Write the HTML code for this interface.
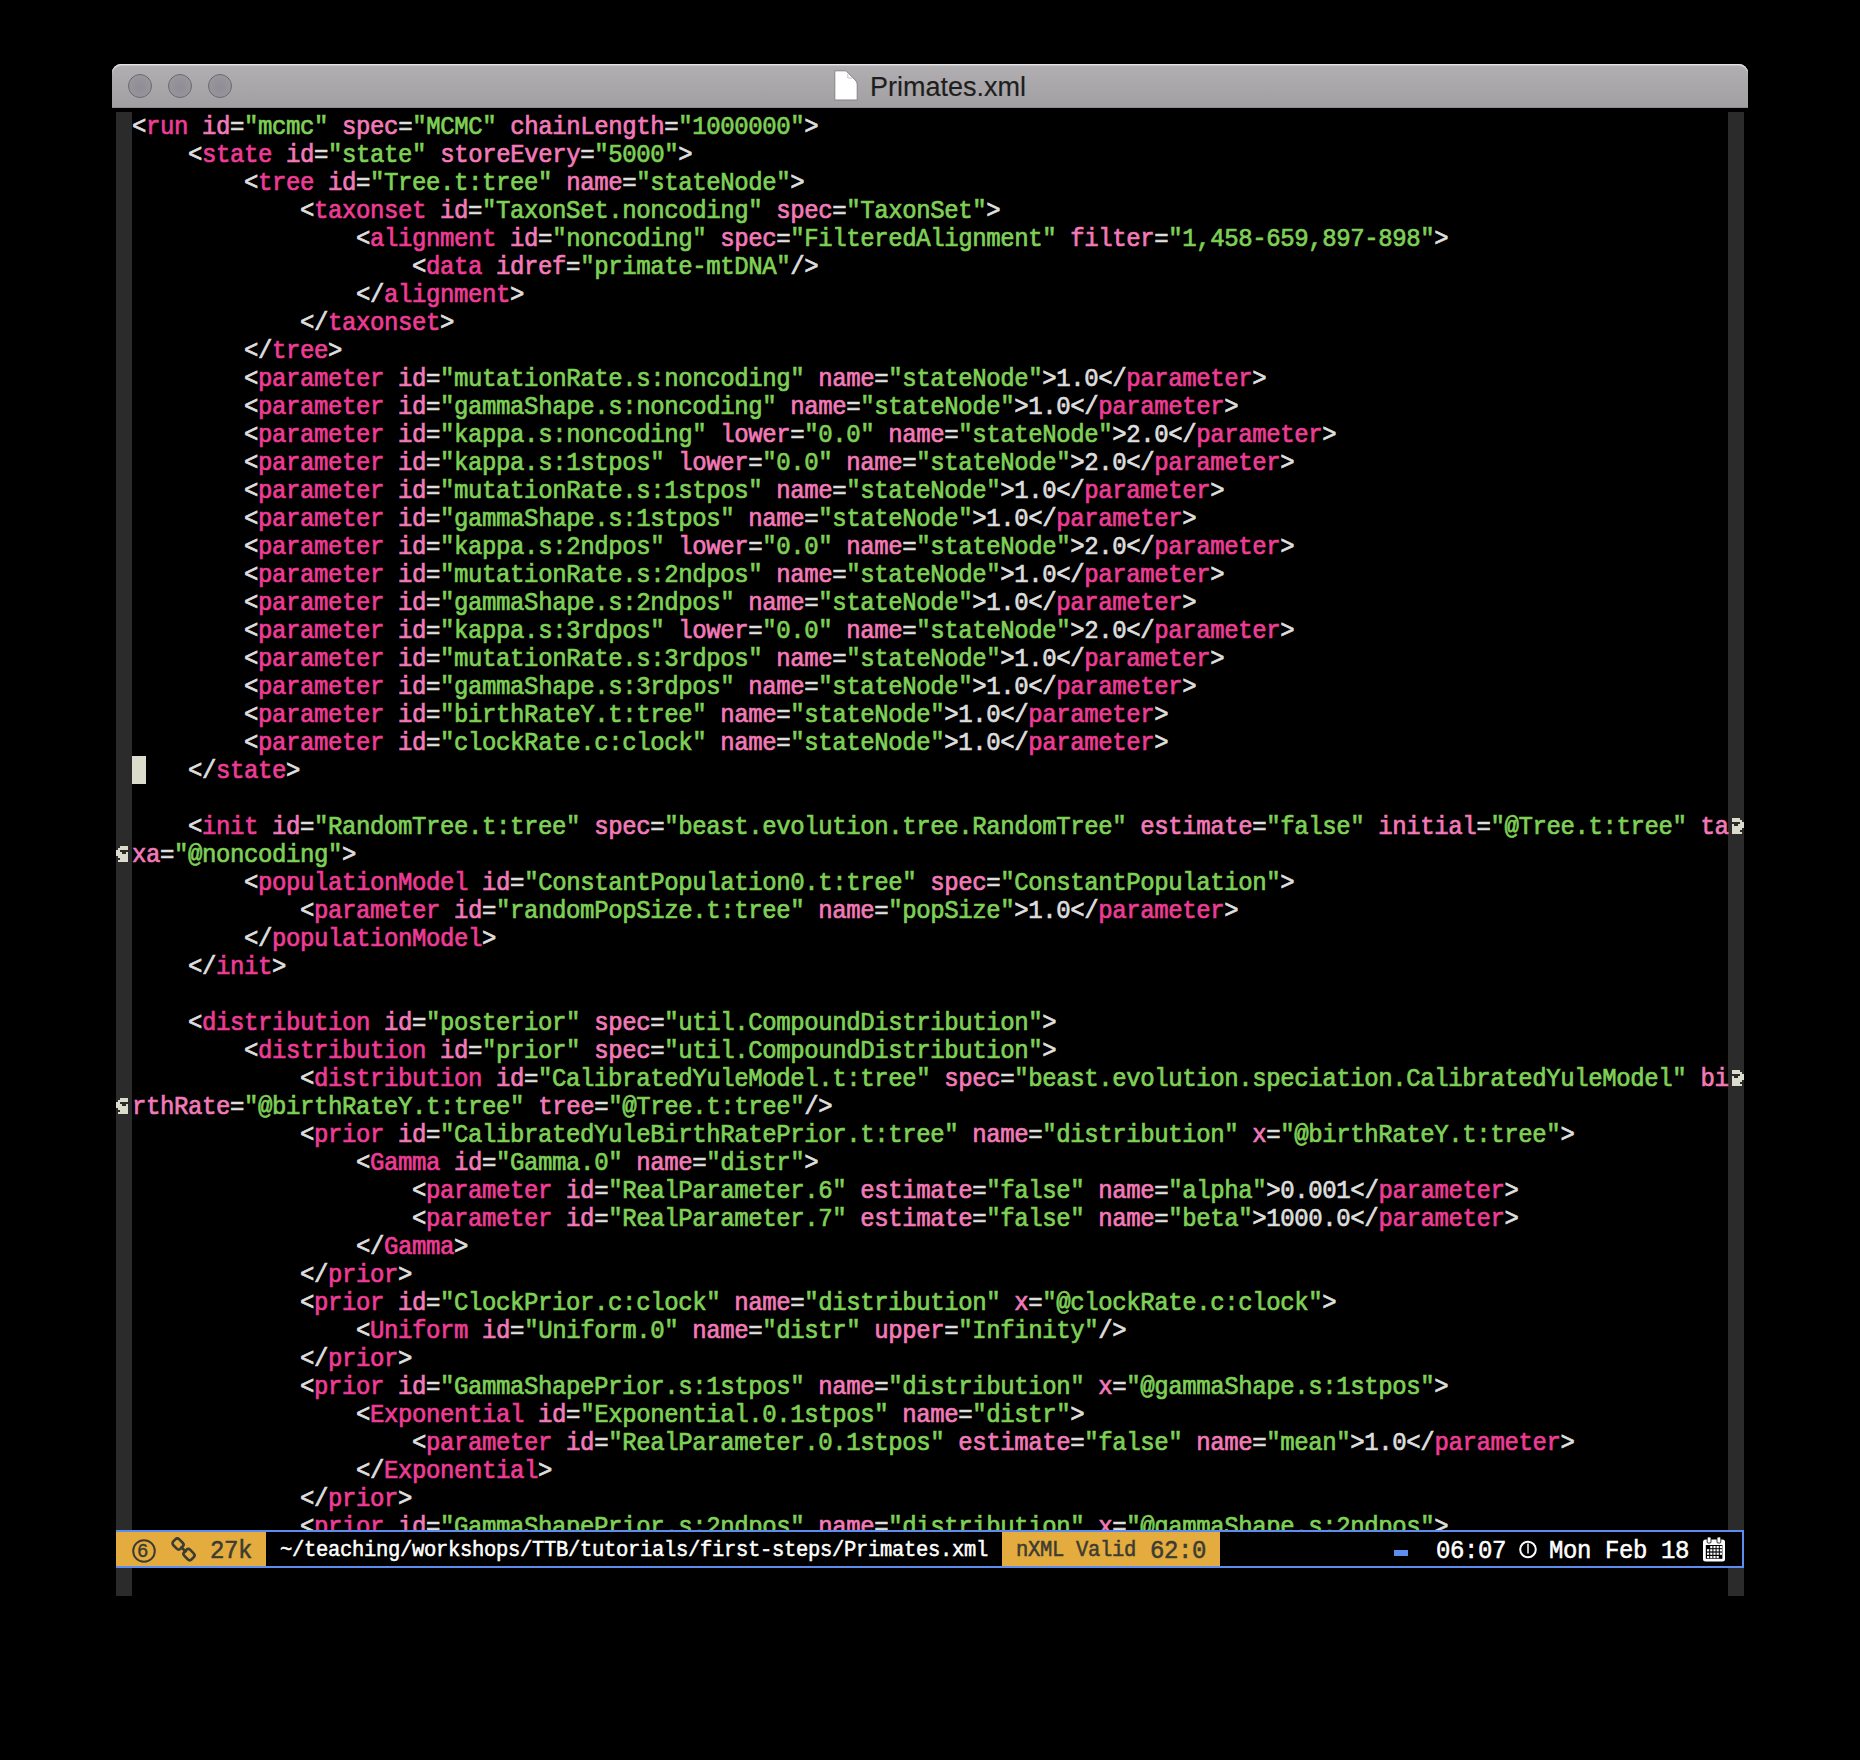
<!DOCTYPE html>
<html><head><meta charset="utf-8">
<style>
html,body{margin:0;padding:0;}
body{width:1860px;height:1760px;background:#000;position:relative;overflow:hidden;font-family:"Liberation Mono",monospace;}
.titlebar{position:absolute;left:112px;top:64px;width:1636px;height:44px;border-radius:9px 9px 0 0;
 background:linear-gradient(#b1afb1,#a19fa1);box-shadow:inset 0 1px 0 #e4e4e4, inset 0 2px 0 #c4c2c4, inset 0 -1px 0 #8e8c8e;}
.tl{position:absolute;top:10px;width:22px;height:22px;border-radius:50%;background:radial-gradient(circle at 50% 55%,#8f8d93 0%,#96949a 55%,#a09ea3 100%);border:1px solid #69686c;}
.title{position:absolute;left:870px;top:69px;font-family:"Liberation Sans",sans-serif;font-size:27px;letter-spacing:0px;color:#1e1e1e;line-height:36px;-webkit-text-stroke:0.15px #1e1e1e;}
.doc{position:absolute;left:834px;top:70px;}
.fr{position:absolute;background:#2b2b2b;width:16px;}
.ln{position:absolute;left:132px;height:28px;line-height:28px;white-space:pre;font-size:24px;letter-spacing:-0.4px;transform:scaleY(1.1);transform-origin:0 0;-webkit-text-stroke:0.65px;color:#dedede;}
.t{color:#ee3c96;}
.a{color:#f27ab9;}
.s{color:#7fd057;}
.bm{position:absolute;}
.cursor{position:absolute;left:132px;top:756px;width:14px;height:28px;background:#dcdccd;}
.ml{position:absolute;left:116px;top:1530px;width:1624px;height:34px;border:2px solid #5c8def;background:#000;}
.seg{position:absolute;top:1532px;height:34px;background:#e4ac3e;}
.mt{position:absolute;white-space:pre;line-height:28px;top:1537px;transform:scaleY(1.04);transform-origin:0 0;}
.big{font-size:24px;letter-spacing:-0.4px;-webkit-text-stroke:0.5px;}
.sm{font-size:20.5px;letter-spacing:-0.3px;-webkit-text-stroke:0.5px;}
.dk{color:#3c3c32;}
.wh{color:#fff;}
.ic{position:absolute;}
</style></head><body>
<div class="titlebar">
 <div class="tl" style="left:16px"></div>
 <div class="tl" style="left:56px"></div>
 <div class="tl" style="left:96px"></div>
</div>
<svg class="doc" width="25" height="32" viewBox="0 0 25 32"><path d="M0.8 0.8 H12 L21.2 10 Q23.2 12 23.2 14 V30 H0.8 Z" fill="#fff" stroke="#858487" stroke-width="1"/><path d="M13.8 3.8 V8 H18.5" fill="none" stroke="#c4c4c4" stroke-width="1"/></svg>
<div class="title">Primates.xml</div>

<div class="fr" style="left:116px;top:112px;height:1418px"></div>
<div class="fr" style="left:1728px;top:112px;height:1418px"></div>
<div class="fr" style="left:116px;top:1568px;height:28px"></div>
<div class="fr" style="left:1728px;top:1568px;height:28px"></div>

<div class="ln" style="top:112px">&lt;<span class="t">run</span> <span class="a">id</span>=<span class="s">&quot;mcmc&quot;</span> <span class="a">spec</span>=<span class="s">&quot;MCMC&quot;</span> <span class="a">chainLength</span>=<span class="s">&quot;1000000&quot;</span>&gt;</div>
<div class="ln" style="top:140px">    &lt;<span class="t">state</span> <span class="a">id</span>=<span class="s">&quot;state&quot;</span> <span class="a">storeEvery</span>=<span class="s">&quot;5000&quot;</span>&gt;</div>
<div class="ln" style="top:168px">        &lt;<span class="t">tree</span> <span class="a">id</span>=<span class="s">&quot;Tree.t:tree&quot;</span> <span class="a">name</span>=<span class="s">&quot;stateNode&quot;</span>&gt;</div>
<div class="ln" style="top:196px">            &lt;<span class="t">taxonset</span> <span class="a">id</span>=<span class="s">&quot;TaxonSet.noncoding&quot;</span> <span class="a">spec</span>=<span class="s">&quot;TaxonSet&quot;</span>&gt;</div>
<div class="ln" style="top:224px">                &lt;<span class="t">alignment</span> <span class="a">id</span>=<span class="s">&quot;noncoding&quot;</span> <span class="a">spec</span>=<span class="s">&quot;FilteredAlignment&quot;</span> <span class="a">filter</span>=<span class="s">&quot;1,458-659,897-898&quot;</span>&gt;</div>
<div class="ln" style="top:252px">                    &lt;<span class="t">data</span> <span class="a">idref</span>=<span class="s">&quot;primate-mtDNA&quot;</span>/&gt;</div>
<div class="ln" style="top:280px">                &lt;/<span class="t">alignment</span>&gt;</div>
<div class="ln" style="top:308px">            &lt;/<span class="t">taxonset</span>&gt;</div>
<div class="ln" style="top:336px">        &lt;/<span class="t">tree</span>&gt;</div>
<div class="ln" style="top:364px">        &lt;<span class="t">parameter</span> <span class="a">id</span>=<span class="s">&quot;mutationRate.s:noncoding&quot;</span> <span class="a">name</span>=<span class="s">&quot;stateNode&quot;</span>&gt;1.0&lt;/<span class="t">parameter</span>&gt;</div>
<div class="ln" style="top:392px">        &lt;<span class="t">parameter</span> <span class="a">id</span>=<span class="s">&quot;gammaShape.s:noncoding&quot;</span> <span class="a">name</span>=<span class="s">&quot;stateNode&quot;</span>&gt;1.0&lt;/<span class="t">parameter</span>&gt;</div>
<div class="ln" style="top:420px">        &lt;<span class="t">parameter</span> <span class="a">id</span>=<span class="s">&quot;kappa.s:noncoding&quot;</span> <span class="a">lower</span>=<span class="s">&quot;0.0&quot;</span> <span class="a">name</span>=<span class="s">&quot;stateNode&quot;</span>&gt;2.0&lt;/<span class="t">parameter</span>&gt;</div>
<div class="ln" style="top:448px">        &lt;<span class="t">parameter</span> <span class="a">id</span>=<span class="s">&quot;kappa.s:1stpos&quot;</span> <span class="a">lower</span>=<span class="s">&quot;0.0&quot;</span> <span class="a">name</span>=<span class="s">&quot;stateNode&quot;</span>&gt;2.0&lt;/<span class="t">parameter</span>&gt;</div>
<div class="ln" style="top:476px">        &lt;<span class="t">parameter</span> <span class="a">id</span>=<span class="s">&quot;mutationRate.s:1stpos&quot;</span> <span class="a">name</span>=<span class="s">&quot;stateNode&quot;</span>&gt;1.0&lt;/<span class="t">parameter</span>&gt;</div>
<div class="ln" style="top:504px">        &lt;<span class="t">parameter</span> <span class="a">id</span>=<span class="s">&quot;gammaShape.s:1stpos&quot;</span> <span class="a">name</span>=<span class="s">&quot;stateNode&quot;</span>&gt;1.0&lt;/<span class="t">parameter</span>&gt;</div>
<div class="ln" style="top:532px">        &lt;<span class="t">parameter</span> <span class="a">id</span>=<span class="s">&quot;kappa.s:2ndpos&quot;</span> <span class="a">lower</span>=<span class="s">&quot;0.0&quot;</span> <span class="a">name</span>=<span class="s">&quot;stateNode&quot;</span>&gt;2.0&lt;/<span class="t">parameter</span>&gt;</div>
<div class="ln" style="top:560px">        &lt;<span class="t">parameter</span> <span class="a">id</span>=<span class="s">&quot;mutationRate.s:2ndpos&quot;</span> <span class="a">name</span>=<span class="s">&quot;stateNode&quot;</span>&gt;1.0&lt;/<span class="t">parameter</span>&gt;</div>
<div class="ln" style="top:588px">        &lt;<span class="t">parameter</span> <span class="a">id</span>=<span class="s">&quot;gammaShape.s:2ndpos&quot;</span> <span class="a">name</span>=<span class="s">&quot;stateNode&quot;</span>&gt;1.0&lt;/<span class="t">parameter</span>&gt;</div>
<div class="ln" style="top:616px">        &lt;<span class="t">parameter</span> <span class="a">id</span>=<span class="s">&quot;kappa.s:3rdpos&quot;</span> <span class="a">lower</span>=<span class="s">&quot;0.0&quot;</span> <span class="a">name</span>=<span class="s">&quot;stateNode&quot;</span>&gt;2.0&lt;/<span class="t">parameter</span>&gt;</div>
<div class="ln" style="top:644px">        &lt;<span class="t">parameter</span> <span class="a">id</span>=<span class="s">&quot;mutationRate.s:3rdpos&quot;</span> <span class="a">name</span>=<span class="s">&quot;stateNode&quot;</span>&gt;1.0&lt;/<span class="t">parameter</span>&gt;</div>
<div class="ln" style="top:672px">        &lt;<span class="t">parameter</span> <span class="a">id</span>=<span class="s">&quot;gammaShape.s:3rdpos&quot;</span> <span class="a">name</span>=<span class="s">&quot;stateNode&quot;</span>&gt;1.0&lt;/<span class="t">parameter</span>&gt;</div>
<div class="ln" style="top:700px">        &lt;<span class="t">parameter</span> <span class="a">id</span>=<span class="s">&quot;birthRateY.t:tree&quot;</span> <span class="a">name</span>=<span class="s">&quot;stateNode&quot;</span>&gt;1.0&lt;/<span class="t">parameter</span>&gt;</div>
<div class="ln" style="top:728px">        &lt;<span class="t">parameter</span> <span class="a">id</span>=<span class="s">&quot;clockRate.c:clock&quot;</span> <span class="a">name</span>=<span class="s">&quot;stateNode&quot;</span>&gt;1.0&lt;/<span class="t">parameter</span>&gt;</div>
<div class="ln" style="top:756px">    &lt;/<span class="t">state</span>&gt;</div>
<div class="ln" style="top:784px"></div>
<div class="ln" style="top:812px">    &lt;<span class="t">init</span> <span class="a">id</span>=<span class="s">&quot;RandomTree.t:tree&quot;</span> <span class="a">spec</span>=<span class="s">&quot;beast.evolution.tree.RandomTree&quot;</span> <span class="a">estimate</span>=<span class="s">&quot;false&quot;</span> <span class="a">initial</span>=<span class="s">&quot;@Tree.t:tree&quot;</span> <span class="a">ta</span></div>
<div class="ln" style="top:840px"><span class="a">xa</span>=<span class="s">&quot;@noncoding&quot;</span>&gt;</div>
<div class="ln" style="top:868px">        &lt;<span class="t">populationModel</span> <span class="a">id</span>=<span class="s">&quot;ConstantPopulation0.t:tree&quot;</span> <span class="a">spec</span>=<span class="s">&quot;ConstantPopulation&quot;</span>&gt;</div>
<div class="ln" style="top:896px">            &lt;<span class="t">parameter</span> <span class="a">id</span>=<span class="s">&quot;randomPopSize.t:tree&quot;</span> <span class="a">name</span>=<span class="s">&quot;popSize&quot;</span>&gt;1.0&lt;/<span class="t">parameter</span>&gt;</div>
<div class="ln" style="top:924px">        &lt;/<span class="t">populationModel</span>&gt;</div>
<div class="ln" style="top:952px">    &lt;/<span class="t">init</span>&gt;</div>
<div class="ln" style="top:980px"></div>
<div class="ln" style="top:1008px">    &lt;<span class="t">distribution</span> <span class="a">id</span>=<span class="s">&quot;posterior&quot;</span> <span class="a">spec</span>=<span class="s">&quot;util.CompoundDistribution&quot;</span>&gt;</div>
<div class="ln" style="top:1036px">        &lt;<span class="t">distribution</span> <span class="a">id</span>=<span class="s">&quot;prior&quot;</span> <span class="a">spec</span>=<span class="s">&quot;util.CompoundDistribution&quot;</span>&gt;</div>
<div class="ln" style="top:1064px">            &lt;<span class="t">distribution</span> <span class="a">id</span>=<span class="s">&quot;CalibratedYuleModel.t:tree&quot;</span> <span class="a">spec</span>=<span class="s">&quot;beast.evolution.speciation.CalibratedYuleModel&quot;</span> <span class="a">bi</span></div>
<div class="ln" style="top:1092px"><span class="a">rthRate</span>=<span class="s">&quot;@birthRateY.t:tree&quot;</span> <span class="a">tree</span>=<span class="s">&quot;@Tree.t:tree&quot;</span>/&gt;</div>
<div class="ln" style="top:1120px">            &lt;<span class="t">prior</span> <span class="a">id</span>=<span class="s">&quot;CalibratedYuleBirthRatePrior.t:tree&quot;</span> <span class="a">name</span>=<span class="s">&quot;distribution&quot;</span> <span class="a">x</span>=<span class="s">&quot;@birthRateY.t:tree&quot;</span>&gt;</div>
<div class="ln" style="top:1148px">                &lt;<span class="t">Gamma</span> <span class="a">id</span>=<span class="s">&quot;Gamma.0&quot;</span> <span class="a">name</span>=<span class="s">&quot;distr&quot;</span>&gt;</div>
<div class="ln" style="top:1176px">                    &lt;<span class="t">parameter</span> <span class="a">id</span>=<span class="s">&quot;RealParameter.6&quot;</span> <span class="a">estimate</span>=<span class="s">&quot;false&quot;</span> <span class="a">name</span>=<span class="s">&quot;alpha&quot;</span>&gt;0.001&lt;/<span class="t">parameter</span>&gt;</div>
<div class="ln" style="top:1204px">                    &lt;<span class="t">parameter</span> <span class="a">id</span>=<span class="s">&quot;RealParameter.7&quot;</span> <span class="a">estimate</span>=<span class="s">&quot;false&quot;</span> <span class="a">name</span>=<span class="s">&quot;beta&quot;</span>&gt;1000.0&lt;/<span class="t">parameter</span>&gt;</div>
<div class="ln" style="top:1232px">                &lt;/<span class="t">Gamma</span>&gt;</div>
<div class="ln" style="top:1260px">            &lt;/<span class="t">prior</span>&gt;</div>
<div class="ln" style="top:1288px">            &lt;<span class="t">prior</span> <span class="a">id</span>=<span class="s">&quot;ClockPrior.c:clock&quot;</span> <span class="a">name</span>=<span class="s">&quot;distribution&quot;</span> <span class="a">x</span>=<span class="s">&quot;@clockRate.c:clock&quot;</span>&gt;</div>
<div class="ln" style="top:1316px">                &lt;<span class="t">Uniform</span> <span class="a">id</span>=<span class="s">&quot;Uniform.0&quot;</span> <span class="a">name</span>=<span class="s">&quot;distr&quot;</span> <span class="a">upper</span>=<span class="s">&quot;Infinity&quot;</span>/&gt;</div>
<div class="ln" style="top:1344px">            &lt;/<span class="t">prior</span>&gt;</div>
<div class="ln" style="top:1372px">            &lt;<span class="t">prior</span> <span class="a">id</span>=<span class="s">&quot;GammaShapePrior.s:1stpos&quot;</span> <span class="a">name</span>=<span class="s">&quot;distribution&quot;</span> <span class="a">x</span>=<span class="s">&quot;@gammaShape.s:1stpos&quot;</span>&gt;</div>
<div class="ln" style="top:1400px">                &lt;<span class="t">Exponential</span> <span class="a">id</span>=<span class="s">&quot;Exponential.0.1stpos&quot;</span> <span class="a">name</span>=<span class="s">&quot;distr&quot;</span>&gt;</div>
<div class="ln" style="top:1428px">                    &lt;<span class="t">parameter</span> <span class="a">id</span>=<span class="s">&quot;RealParameter.0.1stpos&quot;</span> <span class="a">estimate</span>=<span class="s">&quot;false&quot;</span> <span class="a">name</span>=<span class="s">&quot;mean&quot;</span>&gt;1.0&lt;/<span class="t">parameter</span>&gt;</div>
<div class="ln" style="top:1456px">                &lt;/<span class="t">Exponential</span>&gt;</div>
<div class="ln" style="top:1484px">            &lt;/<span class="t">prior</span>&gt;</div>
<div class="ln" style="top:1512px">            &lt;<span class="t">prior</span> <span class="a">id</span>=<span class="s">&quot;GammaShapePrior.s:2ndpos&quot;</span> <span class="a">name</span>=<span class="s">&quot;distribution&quot;</span> <span class="a">x</span>=<span class="s">&quot;@gammaShape.s:2ndpos&quot;</span>&gt;</div>
<svg class="bm" style="left:1728px;top:818px" width="16" height="16" fill="#dcdccd" shape-rendering="crispEdges"><rect x="4" y="0" width="2" height="2"/><rect x="6" y="0" width="2" height="2"/><rect x="8" y="0" width="2" height="2"/><rect x="10" y="0" width="2" height="2"/><rect x="4" y="2" width="2" height="2"/><rect x="6" y="2" width="2" height="2"/><rect x="8" y="2" width="2" height="2"/><rect x="10" y="2" width="2" height="2"/><rect x="12" y="2" width="2" height="2"/><rect x="12" y="4" width="2" height="2"/><rect x="14" y="4" width="2" height="2"/><rect x="4" y="6" width="2" height="2"/><rect x="10" y="6" width="2" height="2"/><rect x="12" y="6" width="2" height="2"/><rect x="14" y="6" width="2" height="2"/><rect x="4" y="8" width="2" height="2"/><rect x="6" y="8" width="2" height="2"/><rect x="8" y="8" width="2" height="2"/><rect x="10" y="8" width="2" height="2"/><rect x="12" y="8" width="2" height="2"/><rect x="14" y="8" width="2" height="2"/><rect x="4" y="10" width="2" height="2"/><rect x="6" y="10" width="2" height="2"/><rect x="8" y="10" width="2" height="2"/><rect x="10" y="10" width="2" height="2"/><rect x="12" y="10" width="2" height="2"/><rect x="4" y="12" width="2" height="2"/><rect x="6" y="12" width="2" height="2"/><rect x="8" y="12" width="2" height="2"/><rect x="10" y="12" width="2" height="2"/><rect x="4" y="14" width="2" height="2"/><rect x="6" y="14" width="2" height="2"/><rect x="8" y="14" width="2" height="2"/><rect x="10" y="14" width="2" height="2"/><rect x="12" y="14" width="2" height="2"/></svg><svg class="bm" style="left:116px;top:846px" width="16" height="16" fill="#dcdccd" shape-rendering="crispEdges"><rect x="4" y="0" width="2" height="2"/><rect x="6" y="0" width="2" height="2"/><rect x="8" y="0" width="2" height="2"/><rect x="10" y="0" width="2" height="2"/><rect x="2" y="2" width="2" height="2"/><rect x="4" y="2" width="2" height="2"/><rect x="6" y="2" width="2" height="2"/><rect x="8" y="2" width="2" height="2"/><rect x="10" y="2" width="2" height="2"/><rect x="0" y="4" width="2" height="2"/><rect x="2" y="4" width="2" height="2"/><rect x="0" y="6" width="2" height="2"/><rect x="2" y="6" width="2" height="2"/><rect x="4" y="6" width="2" height="2"/><rect x="10" y="6" width="2" height="2"/><rect x="0" y="8" width="2" height="2"/><rect x="2" y="8" width="2" height="2"/><rect x="4" y="8" width="2" height="2"/><rect x="6" y="8" width="2" height="2"/><rect x="8" y="8" width="2" height="2"/><rect x="10" y="8" width="2" height="2"/><rect x="2" y="10" width="2" height="2"/><rect x="4" y="10" width="2" height="2"/><rect x="6" y="10" width="2" height="2"/><rect x="8" y="10" width="2" height="2"/><rect x="10" y="10" width="2" height="2"/><rect x="4" y="12" width="2" height="2"/><rect x="6" y="12" width="2" height="2"/><rect x="8" y="12" width="2" height="2"/><rect x="10" y="12" width="2" height="2"/><rect x="2" y="14" width="2" height="2"/><rect x="4" y="14" width="2" height="2"/><rect x="6" y="14" width="2" height="2"/><rect x="8" y="14" width="2" height="2"/><rect x="10" y="14" width="2" height="2"/></svg><svg class="bm" style="left:1728px;top:1070px" width="16" height="16" fill="#dcdccd" shape-rendering="crispEdges"><rect x="4" y="0" width="2" height="2"/><rect x="6" y="0" width="2" height="2"/><rect x="8" y="0" width="2" height="2"/><rect x="10" y="0" width="2" height="2"/><rect x="4" y="2" width="2" height="2"/><rect x="6" y="2" width="2" height="2"/><rect x="8" y="2" width="2" height="2"/><rect x="10" y="2" width="2" height="2"/><rect x="12" y="2" width="2" height="2"/><rect x="12" y="4" width="2" height="2"/><rect x="14" y="4" width="2" height="2"/><rect x="4" y="6" width="2" height="2"/><rect x="10" y="6" width="2" height="2"/><rect x="12" y="6" width="2" height="2"/><rect x="14" y="6" width="2" height="2"/><rect x="4" y="8" width="2" height="2"/><rect x="6" y="8" width="2" height="2"/><rect x="8" y="8" width="2" height="2"/><rect x="10" y="8" width="2" height="2"/><rect x="12" y="8" width="2" height="2"/><rect x="14" y="8" width="2" height="2"/><rect x="4" y="10" width="2" height="2"/><rect x="6" y="10" width="2" height="2"/><rect x="8" y="10" width="2" height="2"/><rect x="10" y="10" width="2" height="2"/><rect x="12" y="10" width="2" height="2"/><rect x="4" y="12" width="2" height="2"/><rect x="6" y="12" width="2" height="2"/><rect x="8" y="12" width="2" height="2"/><rect x="10" y="12" width="2" height="2"/><rect x="4" y="14" width="2" height="2"/><rect x="6" y="14" width="2" height="2"/><rect x="8" y="14" width="2" height="2"/><rect x="10" y="14" width="2" height="2"/><rect x="12" y="14" width="2" height="2"/></svg><svg class="bm" style="left:116px;top:1098px" width="16" height="16" fill="#dcdccd" shape-rendering="crispEdges"><rect x="4" y="0" width="2" height="2"/><rect x="6" y="0" width="2" height="2"/><rect x="8" y="0" width="2" height="2"/><rect x="10" y="0" width="2" height="2"/><rect x="2" y="2" width="2" height="2"/><rect x="4" y="2" width="2" height="2"/><rect x="6" y="2" width="2" height="2"/><rect x="8" y="2" width="2" height="2"/><rect x="10" y="2" width="2" height="2"/><rect x="0" y="4" width="2" height="2"/><rect x="2" y="4" width="2" height="2"/><rect x="0" y="6" width="2" height="2"/><rect x="2" y="6" width="2" height="2"/><rect x="4" y="6" width="2" height="2"/><rect x="10" y="6" width="2" height="2"/><rect x="0" y="8" width="2" height="2"/><rect x="2" y="8" width="2" height="2"/><rect x="4" y="8" width="2" height="2"/><rect x="6" y="8" width="2" height="2"/><rect x="8" y="8" width="2" height="2"/><rect x="10" y="8" width="2" height="2"/><rect x="2" y="10" width="2" height="2"/><rect x="4" y="10" width="2" height="2"/><rect x="6" y="10" width="2" height="2"/><rect x="8" y="10" width="2" height="2"/><rect x="10" y="10" width="2" height="2"/><rect x="4" y="12" width="2" height="2"/><rect x="6" y="12" width="2" height="2"/><rect x="8" y="12" width="2" height="2"/><rect x="10" y="12" width="2" height="2"/><rect x="2" y="14" width="2" height="2"/><rect x="4" y="14" width="2" height="2"/><rect x="6" y="14" width="2" height="2"/><rect x="8" y="14" width="2" height="2"/><rect x="10" y="14" width="2" height="2"/></svg>
<div class="cursor"></div>

<div class="ml"></div>
<div class="seg" style="left:116px;width:150px"></div>
<div class="seg" style="left:1002px;width:218px"></div>
<!-- circled 6 -->
<svg class="ic" style="left:130px;top:1537px" width="28" height="28" viewBox="0 0 28 28">
 <circle cx="14" cy="14" r="10.8" fill="none" stroke="#3c3c32" stroke-width="2"/>
</svg>
<div class="mt dk" style="left:137px;font-size:19px;-webkit-text-stroke:0.4px;top:1537px;transform:scaleY(1.05)">6</div>
<!-- link icon -->
<svg class="ic" style="left:168px;top:1534px" width="32" height="32" viewBox="0 0 32 32">
 <g fill="none" stroke="#3c3c32" stroke-width="2.6">
  <rect x="5.8" y="4.8" width="8.4" height="10.4" rx="2.8" transform="rotate(-45 10 10)"/>
  <rect x="16.8" y="15.4" width="8.4" height="10.4" rx="2.8" transform="rotate(-45 21 20.6)"/>
 </g>
 <line x1="12.5" y1="12.5" x2="18.5" y2="18.3" stroke="#3c3c32" stroke-width="2.6"/>
</svg>
<div class="mt big dk" style="left:210px">27k</div>
<div class="mt sm wh" style="left:280px;top:1536px">~/teaching/workshops/TTB/tutorials/first-steps/Primates.xml</div>
<div class="mt sm dk" style="left:1016px;top:1536px">nXML Valid</div>
<div class="mt big dk" style="left:1150px">62:0</div>
<div style="position:absolute;left:1394px;top:1550px;width:14px;height:6px;background:#5c8def"></div>
<div class="mt big wh" style="left:1436px">06:07</div>
<svg class="ic" style="left:1517px;top:1539px" width="22" height="22" viewBox="0 0 22 22">
 <circle cx="11" cy="10.5" r="7.8" fill="none" stroke="#fff" stroke-width="2"/>
 <line x1="11" y1="4.5" x2="11" y2="14.5" stroke="#fff" stroke-width="1.5"/>
</svg>
<div class="mt big wh" style="left:1549px">Mon Feb 18</div>
<svg class="ic" style="left:1702px;top:1536px" width="26" height="28" viewBox="0 0 26 28">
 <rect x="1" y="3.5" width="22" height="22" rx="2.5" fill="#fff"/>
 <rect x="3.8" y="9" width="16.6" height="13.8" fill="#000"/>
 <rect x="5.2" y="1" width="3.8" height="6" rx="1" fill="#fff" stroke="#000" stroke-width="0.8"/>
 <rect x="15" y="1" width="3.8" height="6" rx="1" fill="#fff" stroke="#000" stroke-width="0.8"/>
 <g fill="#fff">
  <rect x="8.2" y="10" width="2.2" height="2.2"/><rect x="11.4" y="10" width="2.2" height="2.2"/><rect x="14.6" y="10" width="2.2" height="2.2"/><rect x="17.8" y="10" width="2.2" height="2.2"/>
  <rect x="5" y="13.2" width="2.2" height="2.2"/><rect x="8.2" y="13.2" width="2.2" height="2.2"/><rect x="11.4" y="13.2" width="2.2" height="2.2"/><rect x="14.6" y="13.2" width="2.2" height="2.2"/><rect x="17.8" y="13.2" width="2.2" height="2.2"/>
  <rect x="5" y="16.6" width="2.2" height="2.2"/><rect x="8.2" y="16.6" width="2.2" height="2.2"/><rect x="11.4" y="16.6" width="2.2" height="2.2"/><rect x="14.6" y="16.6" width="2.2" height="2.2"/><rect x="17.8" y="16.6" width="2.2" height="2.2"/>
  <rect x="5" y="20" width="2.2" height="2.2"/><rect x="8.2" y="20" width="2.2" height="2.2"/><rect x="11.4" y="20" width="2.2" height="2.2"/><rect x="14.6" y="20" width="2.2" height="2.2"/>
 </g>
</svg>
</body></html>
